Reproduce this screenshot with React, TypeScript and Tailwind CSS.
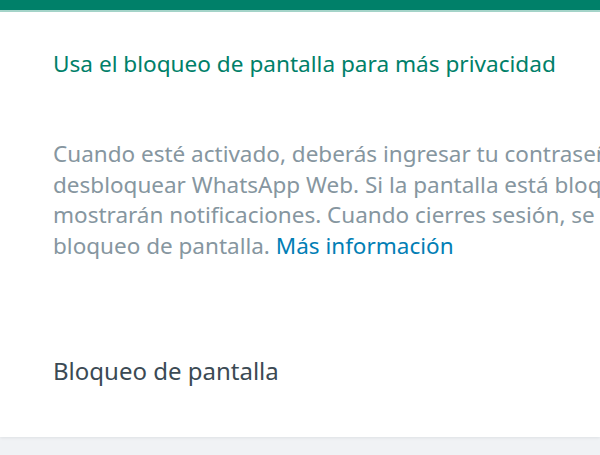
export default function App() {
  return (
    <div className="w-[600px] h-[455px] bg-[#f0f2f5] overflow-hidden flex flex-col" style={{ fontFamily: '"Noto Sans", "Open Sans", sans-serif' }}>
      <div className="h-[10px] bg-[#008069] shrink-0" />
      <div className="h-[2px] bg-[#a6d6cb] shrink-0" />
      <div className="bg-white h-[425px] shrink-0 shadow-[0_1px_3px_rgba(11,20,26,0.08)] pl-[53px] flex flex-col overflow-hidden">
        <div className="pt-[37px] text-[22.6px] leading-[30px] text-[#008069] whitespace-nowrap">
          Usa el bloqueo de pantalla para más privacidad
        </div>
        <p className="mt-[60px] text-[22.5px] leading-[30.6px] text-[#8696a0] whitespace-nowrap">
          Cuando esté activado, deberás ingresar tu contraseña para
          <br />
          desbloquear WhatsApp Web. Si la pantalla está bloqueada, no se
          <br />
          mostrarán notificaciones. Cuando cierres sesión, se borrará el
          <br />
          bloqueo de pantalla. <span className="text-[#027eb5]">Más información</span>
        </p>
        <div className="mt-[95px] text-[24px] leading-[30px] text-[#3b4a54] whitespace-nowrap">Bloqueo de pantalla</div>
      </div>
    </div>
  );
}
